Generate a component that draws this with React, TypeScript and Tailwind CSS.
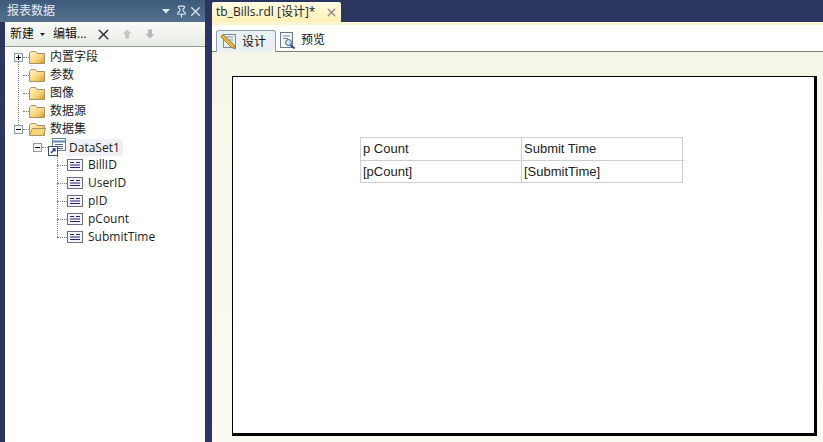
import { Pin, X } from "lucide-react";

const uiFont = "font-['Open_Sans','Noto_Sans_CJK_SC',sans-serif]";

const Folder = ({ open = false }: { open?: boolean }) => (
    <svg width="17" height="15" viewBox="0 0 17 15" className="shrink-0">
        <defs>
            <linearGradient id="fold" x1="0" y1="0" x2="1" y2="1">
                <stop offset="0" stopColor="#fff6d0" />
                <stop offset="0.6" stopColor="#f8d276" />
                <stop offset="1" stopColor="#dd931c" />
            </linearGradient>
        </defs>
        <path d="M0.5 3.5 V13.5 H15.5 V3.5 H8 L6.5 1.5 H2 Z" fill="url(#fold)" stroke="#a8946a" />
        {open && <path d="M3.5 6.5 H16.5 L14.5 13.5 H0.5 Z" fill="#fbd772" stroke="#a8946a" />}
    </svg>
);

const FieldIcon = () => (
    <svg width="16" height="12" viewBox="0 0 16 12" className="shrink-0">
        <rect x="0.5" y="0.5" width="15" height="11" fill="#f4f4fa" stroke="#6d6d88" />
        <path d="M3 3.5 H7 M9 3.5 H13 M3 6 H13 M3 8.5 H13" stroke="#24246c" strokeWidth="1" />
    </svg>
);

const DataSetIcon = () => (
    <svg width="18" height="18" viewBox="0 0 18 18" className="shrink-0">
        <rect x="4.5" y="0.5" width="13" height="12" fill="#fff" stroke="#6f7f92" />
        <path d="M4.5 3.5 H17.5" stroke="#5b86b8" strokeWidth="2" />
        <path d="M7 6.5 H15 M7 8.5 H15 M7 10.5 H15" stroke="#5a6a7a" />
        <rect x="0.5" y="8.5" width="9" height="9" fill="#fff" stroke="#40506a" />
        <path d="M3 15 L7 11 M4.5 11 H7 V13.5" stroke="#1c3f94" strokeWidth="1.3" fill="none" />
    </svg>
);

const BlockArrow = ({ down = false, fill }: { down?: boolean; fill: string }) => (
    <svg width="10" height="10" viewBox="0 0 10 10" className="shrink-0">
        <path
            d={down ? "M3 0.5 H7 V5 H9.5 L5 9.5 L0.5 5 H3 Z" : "M5 0.5 L9.5 5 H7 V9.5 H3 V5 H0.5 Z"}
            fill={fill}
        />
    </svg>
);

const Expander = ({ minus = false }: { minus?: boolean }) => (
    <span className="relative flex h-[9px] w-[9px] shrink-0 items-center justify-center border border-[#8c9aa8] bg-[#f4f4f0]">
        <span className="h-px w-[5px] bg-black" />
        {!minus && <span className="absolute h-[5px] w-px bg-black" />}
    </span>
);

const HDots = ({ w }: { w: string }) => <span className={`${w} shrink-0 border-t border-dotted border-[#808080]`} />;

const folders = [
    { label: "内置字段", exp: "plus" },
    { label: "参数" },
    { label: "图像" },
    { label: "数据源" },
    { label: "数据集", exp: "minus", open: true },
];

const fields = ["BillID", "UserID", "pID", "pCount", "SubmitTime"];

function Tree() {
    return (
        <div className={`relative flex-1 bg-white pl-[9px] pt-[1px] text-[12px] text-[#222] ${uiFont}`}>
            {/* root level guide */}
            <span className="absolute left-[13px] top-[10px] h-[72px] border-l border-dotted border-[#808080]" />
            {folders.map((f) => (
                <div key={f.label} className="relative flex h-[18px] items-center">
                    <span className="flex w-[9px] justify-center">
                        {f.exp && <Expander minus={f.exp === "minus"} />}
                    </span>
                    <HDots w="w-[6px]" />
                    <Folder open={f.open} />
                    <span className="ml-[4px] leading-none">{f.label}</span>
                </div>
            ))}
            <div className="relative flex h-[18px] items-center pl-[19px]">
                <Expander minus />
                <HDots w="w-[6px]" />
                <DataSetIcon />
                <span className="h-[17px] rounded-[2px] bg-[#eef2f6] px-[3px] leading-[17px]">DataSet1</span>
            </div>
            <div className="relative pl-[43px]">
                <span className="absolute left-[43px] top-0 h-[81px] border-l border-dotted border-[#808080]" />
                {fields.map((n) => (
                    <div key={n} className="flex h-[18px] items-center">
                        <HDots w="w-[10px]" />
                        <FieldIcon />
                        <span className="ml-[5px] leading-none">{n}</span>
                    </div>
                ))}
            </div>
        </div>
    );
}

function LeftPanel() {
    return (
        <div className="flex w-[205px] shrink-0 flex-col pl-[5px]">
            <div className={`-ml-[5px] flex h-[22px] items-center bg-gradient-to-b from-[#3f5b7c] to-[#54708f] pl-[7px] pr-[2px] text-[12px] text-[#e6edf4] ${uiFont}`}>
                <span className="flex-1">报表数据</span>
                <svg width="8" height="5" viewBox="0 0 8 5" className="mr-[5px]"><path d="M0 0 H8 L4 4.5 Z" fill="#dfe8f0" /></svg>
                <Pin size={13} className="text-[#dfe8f0]" />
                <X size={15} className="text-[#dfe8f0]" />
            </div>
            <div className={`flex h-[25px] items-center border-b border-[#9a9a90] bg-gradient-to-b from-[#fbfbf8] to-[#e6ebe4] pl-[5px] text-[12px] text-[#111] ${uiFont}`}>
                <span>新建</span>
                <svg width="5" height="3" viewBox="0 0 5 3" className="ml-[6px] mr-[8px]"><path d="M0 0 H5 L2.5 3 Z" fill="#222" /></svg>
                <span>编辑...</span>
                <X size={17} strokeWidth={2} className="ml-[9px] text-[#333]" />
                <span className="ml-[10px]"><BlockArrow fill="#c0c6c6" /></span>
                <span className="ml-[13px]"><BlockArrow down fill="#b4baba" /></span>
            </div>
            <Tree />
        </div>
    );
}

function ReportTable() {
    return (
        <div className="ml-[127px] mt-[60px] grid w-[323px] grid-cols-[161px_162px] border border-[#cfcfcf] font-['Liberation_Sans',sans-serif] text-[13px] text-[#222]">
            <div className="flex h-[23px] items-center border-b border-r border-[#cfcfcf] pl-[2px]">p Count</div>
            <div className="flex h-[23px] items-center border-b border-[#cfcfcf] pl-[2px]">Submit Time</div>
            <div className="flex h-[21px] items-center border-r border-[#cfcfcf] pl-[2px]">[pCount]</div>
            <div className="flex h-[21px] items-center pl-[2px]">[SubmitTime]</div>
        </div>
    );
}

function Designer() {
    return (
        <div className="flex min-w-0 flex-1 flex-col">
            <div className="flex h-[22px] shrink-0 items-end">
                <div className={`flex h-[20px] w-[129px] items-center rounded-t-[2px] bg-gradient-to-b from-[#fffbe6] to-[#fdf0b4] pl-[4px] text-[12px] text-[#222] ${uiFont}`}>
                    <span className="flex-1 whitespace-nowrap">tb_Bills.rdl [设计]*</span>
                    <X size={13} strokeWidth={2.5} className="mr-[3px] text-[#8a8a80]" />
                </div>
            </div>
            <div className="h-[3px] shrink-0 bg-[#fbf6d2]" />
            <div className={`flex h-[27px] shrink-0 items-end border-b border-[#7c7c7c] bg-white pl-[4px] text-[12px] text-[#111] ${uiFont}`}>
                <div className="-mb-px flex h-[22px] w-[60px] items-center gap-[5px] rounded-t-[3px] border border-b-0 border-[#8ea0b0] bg-[#eaf1f4] pl-[3px]">
                    <svg width="17" height="17" viewBox="0 0 17 17" className="shrink-0">
                        <rect x="3.5" y="1.5" width="12" height="13" fill="#e4ebf2" stroke="#7a8a9a" />
                        <path d="M6 4 H13 M9 7 H13 M11 10 H13" stroke="#8a9aaa" />
                        <path d="M3 1.5 L0.8 3.5 L11.5 14.5 L15.5 16 L14 12 Z" fill="#e8b838" stroke="#8a6a18" strokeWidth="0.8" />
                    </svg>
                    <span>设计</span>
                </div>
                <div className="flex h-[22px] items-center gap-[5px] pl-[4px]">
                    <svg width="16" height="17" viewBox="0 0 16 17" className="shrink-0">
                        <rect x="0.5" y="0.5" width="12" height="15" fill="#f4f6f8" stroke="#6a7a8c" />
                        <path d="M3 4 H10 M3 6.5 H8" stroke="#7a8a9c" />
                        <circle cx="8.5" cy="10.5" r="3" fill="#cfe2f4" stroke="#3a5a8a" />
                        <path d="M10.5 13 L14.5 16.5" stroke="#2a4a7a" strokeWidth="1.8" />
                    </svg>
                    <span>预览</span>
                </div>
            </div>
            <div className="min-h-0 flex-1 bg-gradient-to-b from-[#f6f6e8] to-[#fbfbf2] pl-[20px] pr-[6px] pt-[24px]">
                <div className="h-[360px] border-l border-t border-black border-b-[3px] border-r-[3px] bg-white">
                    <ReportTable />
                </div>
            </div>
        </div>
    );
}

export default function App() {
    return (
        <div className="flex h-[442px] w-[823px] gap-[7px] overflow-hidden bg-[#2b3560]">
            <LeftPanel />
            <Designer />
        </div>
    );
}
